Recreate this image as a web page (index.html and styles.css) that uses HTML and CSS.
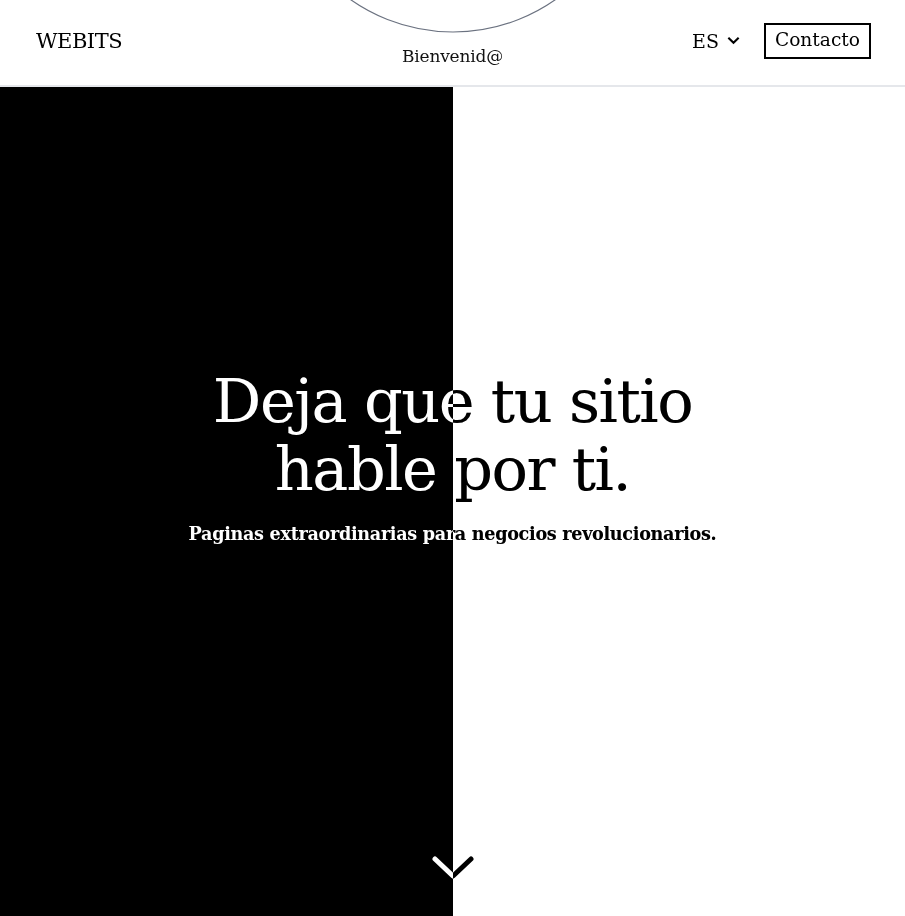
FILE: index.html
```html
<!DOCTYPE html>
<html lang="es">
<head>
<meta charset="utf-8">
<title>WEBITS</title>
<link rel="stylesheet" href="styles.css">
</head>
<body>
<header class="header">
  <a class="logo" href="#">WEBITS</a>
  <div class="welcome">
    <svg class="ring" width="420" height="85" viewBox="0 0 420 85" aria-hidden="true">
      <circle cx="210" cy="-146" r="178" fill="none" stroke="#6b7280" stroke-width="1.2"/>
    </svg>
    <span class="welcome-text">Bienvenid@</span>
  </div>
  <nav class="nav">
    <button class="lang">ES
      <svg width="15" height="15" viewBox="0 0 16 16" aria-hidden="true"><path d="M2.5 5 L8 10.5 L13.5 5" fill="none" stroke="#000" stroke-width="2.2"/></svg>
    </button>
    <a class="contact" href="#">Contacto</a>
  </nav>
</header>
<main class="hero">
  <div class="hero-content">
    <h1 class="title">Deja que tu sitio<br>hable por ti.</h1>
    <p class="subtitle">Paginas extraordinarias para negocios revolucionarios.</p>
  </div>
  <svg class="down" width="44" height="28" viewBox="0 0 44 28" aria-hidden="true"><path d="M4 5 L22 22 L40 5" fill="none" stroke="#fff" stroke-width="5" stroke-linecap="round" stroke-linejoin="round"/></svg>
</main>
</body>
</html>
```
FILE: styles.css
```css
* { box-sizing: border-box; }
html, body { margin: 0; padding: 0; }
body {
  font-family: "DejaVu Serif", "Liberation Serif", serif;
  color: #000;
  background: #fff;
  overflow: hidden;
}
.header {
  height: 87px;
  display: flex;
  align-items: center;
  justify-content: space-between;
  padding: 0 34px 0 36px;
  border-bottom: 2px solid #e5e7eb;
  position: relative;
  background: #fff;
}
.logo {
  font-size: 21px;
  color: #000;
  text-decoration: none;
  letter-spacing: -0.5px;
  margin-top: -4px;
}
.welcome {
  position: absolute;
  left: 50%;
  top: 0;
  transform: translateX(-50%);
  width: 420px;
  height: 85px;
  display: flex;
  justify-content: center;
  align-items: flex-end;
  padding-bottom: 19px;
}
.ring {
  position: absolute;
  left: 0;
  top: 0;
}
.welcome-text {
  font-size: 17px;
  position: relative;
  color: #111;
  letter-spacing: -0.2px;
}
.nav {
  display: flex;
  align-items: center;
  gap: 23px;
  margin-top: -4px;
}
.lang {
  font-family: inherit;
  font-size: 19px;
  background: none;
  border: 0;
  padding: 0;
  display: flex;
  align-items: center;
  gap: 7px;
  color: #000;
}
.contact {
  font-size: 18.6px;
  color: #000;
  text-decoration: none;
  border: 2px solid #000;
  padding: 3px 9px 5px;
  line-height: 24px;
}
.hero {
  height: 829px;
  background: linear-gradient(to right, #000 0, #000 453px, #fff 453px, #fff 100%);
  display: flex;
  flex-direction: column;
  align-items: center;
  justify-content: center;
  position: relative;
}
.hero-content {
  text-align: center;
  color: #fff;
  mix-blend-mode: difference;
  margin-top: -93px;
}
.title {
  font-weight: 500;
  font-size: 60.6px;
  line-height: 68px;
  margin: 0;
  letter-spacing: -1.5px;
}
.subtitle {
  margin: 20px 0 0;
  font-size: 17.6px;
  font-weight: 600;
  letter-spacing: -0.3px;
}
.down {
  position: absolute;
  left: 431px;
  bottom: 34px;
  mix-blend-mode: difference;
}
```
